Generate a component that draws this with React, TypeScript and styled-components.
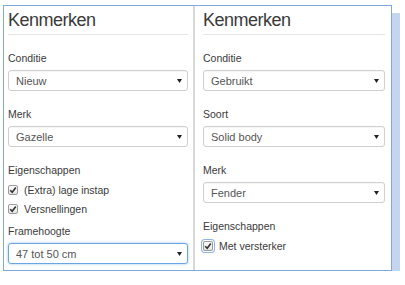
import * as React from "react";
import styled, { createGlobalStyle } from "styled-components";

type Field =
  | { kind: "select"; label: string; value: string; focused?: boolean }
  | { kind: "checks"; label: string; items: string[]; focusedIndex?: number };

const leftFields: Field[] = [
  { kind: "select", label: "Conditie", value: "Nieuw" },
  { kind: "select", label: "Merk", value: "Gazelle" },
  { kind: "checks", label: "Eigenschappen", items: ["(Extra) lage instap", "Versnellingen"] },
  { kind: "select", label: "Framehoogte", value: "47 tot 50 cm", focused: true },
];

const rightFields: Field[] = [
  { kind: "select", label: "Conditie", value: "Gebruikt" },
  { kind: "select", label: "Soort", value: "Solid body" },
  { kind: "select", label: "Merk", value: "Fender" },
  { kind: "checks", label: "Eigenschappen", items: ["Met versterker"], focusedIndex: 0 },
];

const GlobalStyle = createGlobalStyle`
  html, body {
    margin: 0;
    padding: 0;
    background: #ffffff;
  }
  body {
    font-family: "Liberation Sans", Arial, sans-serif;
    color: #333;
  }
`;

const Page = styled.div`
  padding: 5px 0 0 3px;
`;

const Frame = styled.div`
  display: flex;
  width: 389px;
  height: 266px;
  box-sizing: border-box;
  border: 1px solid #7ea8df;
  background: #fff;
  box-shadow: 8px 8px 0 #c4d5ef;
`;

const Panel = styled.div<{ $divider?: boolean }>`
  box-sizing: border-box;
  flex: ${(p) => (p.$divider ? "1" : "0 0 189px")};
  padding: ${(p) => (p.$divider ? "0 6px 0 8px" : "0 5px 0 4px")};
  border-left: ${(p) => (p.$divider ? "2px solid #d8d8d8" : "none")};
  display: flex;
  flex-direction: column;
`;

const Heading = styled.h3`
  margin: 3px 0 0;
  font-size: 18px;
  line-height: 22px;
  letter-spacing: -0.5px;
  font-weight: normal;
  color: #3a3a3a;
`;

const Rule = styled.div`
  margin-top: 3px;
  height: 1px;
  background: #e6e6e6;
`;

const Group = styled.div<{ $tight?: boolean }>`
  margin-top: ${(p) => (p.$tight ? "6px" : "16px")};
  display: flex;
  flex-direction: column;
`;

const Label = styled.div`
  font-size: 10.5px;
  line-height: 15px;
  color: #3a3a3a;
`;

const Select = styled.div<{ $focused?: boolean }>`
  margin-top: 4px;
  height: 21px;
  box-sizing: border-box;
  border: 1px solid ${(p) => (p.$focused ? "#6aa5e3" : "#cfcfcf")};
  border-radius: 3px;
  box-shadow: ${(p) =>
    p.$focused ? "0 0 3px rgba(102, 165, 233, 0.6)" : "inset 0 1px 1px rgba(0,0,0,0.04)"};
  padding: 0 5px 0 7px;
  display: flex;
  align-items: center;
  justify-content: space-between;
  font-size: 11px;
  color: #555;
  background: #fff;
`;

const CheckList = styled.div`
  margin-top: 2px;
  display: flex;
  flex-direction: column;
`;

const CheckRow = styled.div`
  height: 19px;
  display: flex;
  align-items: center;
  gap: 6px;
  font-size: 10.5px;
  color: #3a3a3a;
`;

const Box = styled.span<{ $focused?: boolean }>`
  width: 10px;
  height: 10px;
  box-sizing: border-box;
  border: 1px solid #9a9a9a;
  border-radius: 2px;
  background: linear-gradient(#fdfdfd, #e4e4e4);
  display: flex;
  align-items: center;
  justify-content: center;
  box-shadow: ${(p) => (p.$focused ? "0 0 0 1px #fff, 0 0 0 2px #8fb3e6" : "none")};
`;

const Arrow = () => (
  <svg width="5" height="4" viewBox="0 0 5 4">
    <path d="M0 0 H5 L2.5 4 Z" fill="#222" />
  </svg>
);

const Check = () => (
  <svg width="8" height="8" viewBox="0 0 8 8">
    <path d="M1.2 4.2 L3.2 6.2 L6.8 1.4" fill="none" stroke="#333" strokeWidth="1.6" />
  </svg>
);

const FieldView: React.FC<{ field: Field; prev?: Field }> = ({ field, prev }) => {
  const tight = prev?.kind === "checks";
  if (field.kind === "select") {
    return (
      <Group $tight={tight}>
        <Label>{field.label}</Label>
        <Select $focused={field.focused}>
          <span>{field.value}</span>
          <Arrow />
        </Select>
      </Group>
    );
  }
  return (
    <Group $tight={tight}>
      <Label>{field.label}</Label>
      <CheckList>
        {field.items.map((item, i) => (
          <CheckRow key={item}>
            <Box $focused={field.focusedIndex === i}>
              <Check />
            </Box>
            {item}
          </CheckRow>
        ))}
      </CheckList>
    </Group>
  );
};

const KenmerkenPanel: React.FC<{ fields: Field[]; divider?: boolean }> = ({ fields, divider }) => (
  <Panel $divider={divider}>
    <Heading>Kenmerken</Heading>
    <Rule />
    {fields.map((f, i) => (
      <FieldView key={f.label + i} field={f} prev={fields[i - 1]} />
    ))}
  </Panel>
);

export default function App() {
  return (
    <>
      <GlobalStyle />
      <Page>
        <Frame>
          <KenmerkenPanel fields={leftFields} />
          <KenmerkenPanel fields={rightFields} divider />
        </Frame>
      </Page>
    </>
  );
}
